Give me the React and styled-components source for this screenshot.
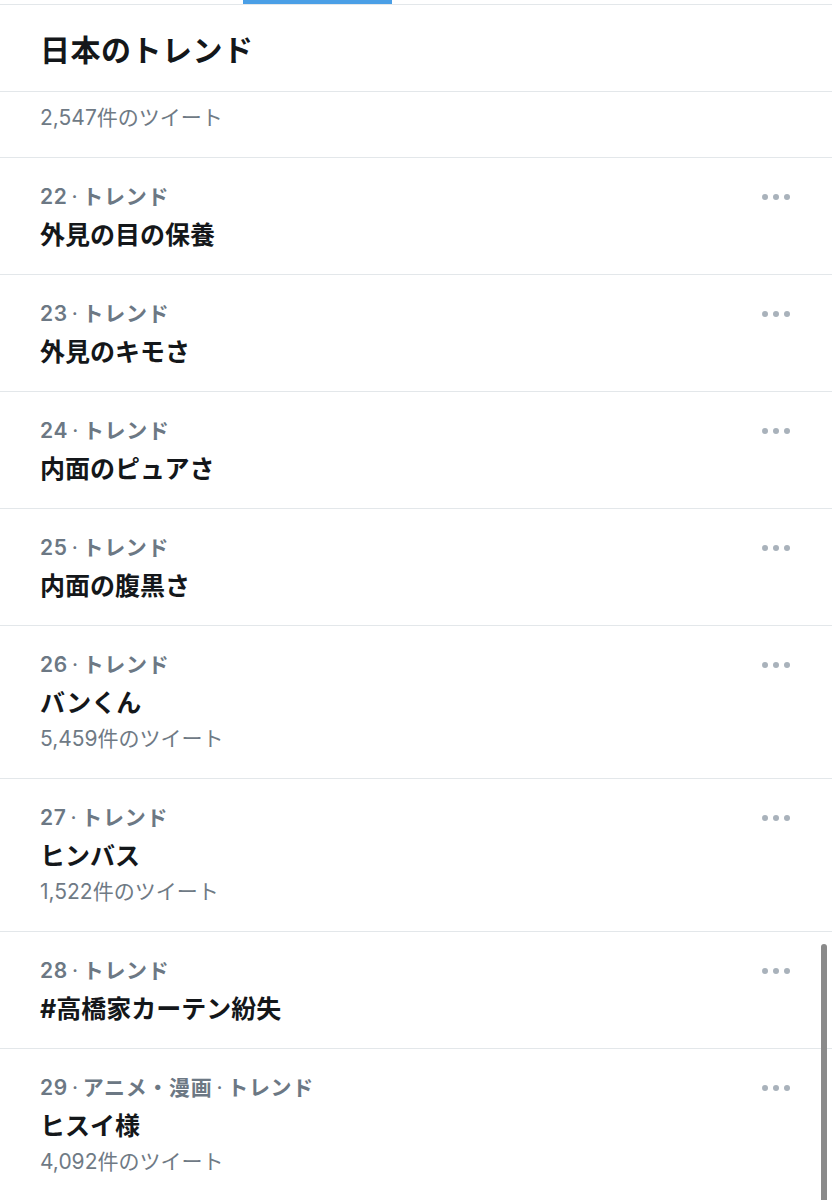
import React from 'react'
import styled, { createGlobalStyle } from 'styled-components'

const GlobalStyle = createGlobalStyle`
    body {
        margin: 0;
        background: #fff;
        font-family: Inter, "Noto Sans CJK JP", sans-serif;
    }
`

const Page = styled.div`
    position: relative;
    width: 832px;
    height: 1200px;
    overflow: hidden;
    background: #fff;
`

const Tabs = styled.div`
    height: 4px;
    border-bottom: 1px solid #e3e7ea;
    display: flex;
    padding-left: 243px;
`

const TabLine = styled.div`
    width: 149px;
    height: 4px;
    background: #4a9fe6;
`

const Header = styled.div`
    height: 86px;
    display: flex;
    align-items: center;
    padding-left: 40px;
    border-bottom: 1px solid #e3e7ea;

    h1 {
        margin: 0;
        font-size: 30px;
        font-weight: 700;
        color: #14171a;
        letter-spacing: 0.5px;
    }
`

const Row = styled.div`
    display: flex;
    justify-content: space-between;
    padding: ${p => p.top ? '7px 40px 20px' : '20px 40px'};
    border-bottom: 1px solid #e3e7ea;
`

const Lines = styled.div`
    display: flex;
    flex-direction: column;
`

const Meta = styled.div`
    height: 38px;
    line-height: 38px;
    font-size: 21px;
    font-weight: 600;
    color: #6c7884;
    letter-spacing: 0.7px;

    span {
        margin: 0 4px;
        font-weight: 400;
    }
`

const Title = styled.div`
    height: 38px;
    line-height: 38px;
    font-size: 25px;
    font-weight: 700;
    color: #14171a;
`

const Count = styled.div`
    height: ${p => p.first ? 38 : 36}px;
    line-height: ${p => p.first ? 38 : 34}px;
    font-size: 21px;
    color: #6f7a85;
`

const More = styled.div`
    display: flex;
    gap: 5px;
    height: 38px;
    align-items: center;
    margin-right: 2px;

    i {
        width: 6px;
        height: 6px;
        border-radius: 50%;
        background: #a9b2bb;
    }
`

const Scrollbar = styled.div`
    position: absolute;
    right: 5px;
    top: 944px;
    width: 6px;
    height: 270px;
    border-radius: 3px;
    background: #8a8a8a;
`

const trends = [
    { rank: 22, name: '外見の目の保養' },
    { rank: 23, name: '外見のキモさ' },
    { rank: 24, name: '内面のピュアさ' },
    { rank: 25, name: '内面の腹黒さ' },
    { rank: 26, name: 'バンくん', count: '5,459' },
    { rank: 27, name: 'ヒンバス', count: '1,522' },
    { rank: 28, name: '#高橋家カーテン紛失' },
    { rank: 29, cat: 'アニメ・漫画', name: 'ヒスイ様', count: '4,092' },
]

const Trend = ({ rank, cat, name, count }) => (
    <Row>
        <Lines>
            <Meta>
                {rank}<span>·</span>
                {cat && <>{cat}<span>·</span></>}
                トレンド
            </Meta>
            <Title>{name}</Title>
            {count && <Count>{count}件のツイート</Count>}
        </Lines>
        <More><i /><i /><i /></More>
    </Row>
)

const App = () => {
    const rows = trends.map((t, index) => <Trend key={index} {...t} />)

    return (
        <Page>
            <GlobalStyle />
            <Tabs><TabLine /></Tabs>
            <Header><h1>日本のトレンド</h1></Header>
            <Row top>
                <Lines>
                    <Count first>2,547件のツイート</Count>
                </Lines>
            </Row>
            {rows}
            <Scrollbar />
        </Page>
    )
}

export default App
